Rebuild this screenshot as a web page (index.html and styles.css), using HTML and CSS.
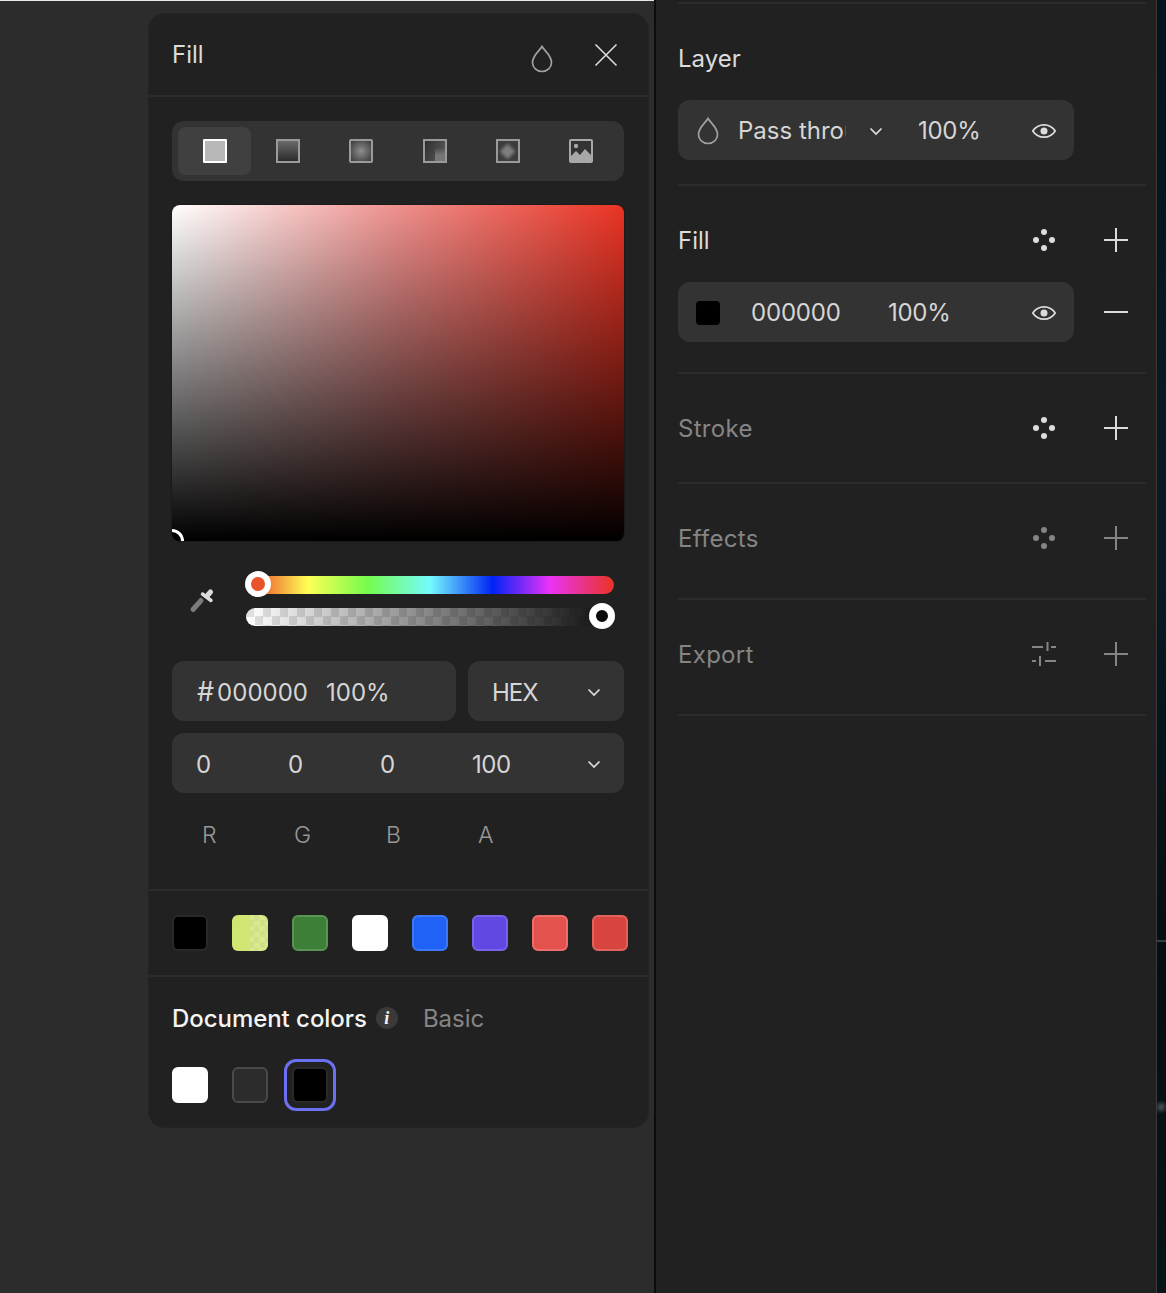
FILE: index.html
```html
<!DOCTYPE html>
<html>
<head>
    <title>Fill</title>
    <link rel="stylesheet" href="styles.css">
</head>
<body>
    <svg class="sprites" width="0" height="0">
        <symbol id="i-drop" viewBox="0 0 24 28"><path d="M12 1.500C9.800 5.500 2.500 10.500 2.500 17.500a9.500 9 0 0 0 19 0C21.500 10.500 14.200 5.500 12 1.500z" fill="none" stroke="currentColor" stroke-width="1.700"/></symbol>
        <symbol id="i-chev" viewBox="0 0 24 24"><path d="M6.500 9.500 12 15l5.500-5.500" fill="none" stroke="currentColor" stroke-width="1.700"/></symbol>
        <symbol id="i-eye" viewBox="0 0 24 24"><path d="M.8 12C3.500 7.800 7.500 5.800 12 5.800s8.500 2 11.200 6.200c-2.700 4.200-6.700 6.200-11.200 6.200S3.500 16.200.8 12z" fill="none" stroke="currentColor" stroke-width="1.700"/><circle cx="12" cy="12" r="3.500" fill="currentColor"/></symbol>
        <symbol id="i-dots" viewBox="0 0 24 24"><circle cx="12" cy="4" r="3" fill="currentColor"/><circle cx="4" cy="12" r="3" fill="currentColor"/><circle cx="20" cy="12" r="3" fill="currentColor"/><circle cx="12" cy="20" r="3" fill="currentColor"/></symbol>
        <symbol id="i-plus" viewBox="0 0 24 24"><path d="M12 0v24M0 12h24" fill="none" stroke="currentColor" stroke-width="2"/></symbol>
        <symbol id="i-sliders" viewBox="0 0 24 24"><path d="M0 5h11M15.500 0v9M19 5h5M0 19h4M8 14v10M13 19h11" fill="none" stroke="currentColor" stroke-width="2"/></symbol>
    </svg>

    <div class="stage">
        <div class="fill-panel">
            <div class="panel-head">
                <span class="title">Fill</span>
                <svg class="head-drop"><use href="#i-drop"/></svg>
                <svg class="head-close" viewBox="0 0 24 24"><path d="M1.500 1.500l21 21M22.500 1.500l-21 21" fill="none" stroke="currentColor" stroke-width="1.600"/></svg>
            </div>

            <div class="panel-body">
                <div class="tabs">
                    <div class="tab active"><span class="tab-icon solid"></span></div>
                    <div class="tab"><span class="tab-icon linear"></span></div>
                    <div class="tab"><span class="tab-icon radial"></span></div>
                    <div class="tab"><span class="tab-icon angular"></span></div>
                    <div class="tab"><span class="tab-icon diamond"></span></div>
                    <div class="tab">
                        <svg class="tab-svg" viewBox="0 0 24 24"><path fill-rule="evenodd" d="M2 0h20a2 2 0 0 1 2 2v20a2 2 0 0 1-2 2H2a2 2 0 0 1-2-2V2a2 2 0 0 1 2-2zM2 2v15l5-5 4 4 5-6 6 6V2z" fill="#a8a8a8"/><circle cx="7" cy="7" r="2.200" fill="#a8a8a8"/></svg>
                    </div>
                </div>

                <div class="picker">
                    <span class="picker-handle"></span>
                </div>

                <div class="slider-row">
                    <svg class="dropper" viewBox="0 0 26 26">
                        <path d="M4 21.500 12 12.500" fill="none" stroke="#7c7c7c" stroke-width="5" stroke-linecap="round"/>
                        <path d="M13.500 6 22 12.500" fill="none" stroke="#dcdcdc" stroke-width="3.500" stroke-linecap="round"/>
                        <path d="M18 8l3.500-4" fill="none" stroke="#dcdcdc" stroke-width="5" stroke-linecap="round"/>
                    </svg>
                    <div class="sliders">
                        <div class="hue"><span class="thumb hue-thumb"></span></div>
                        <div class="alpha"><span class="thumb alpha-thumb"></span></div>
                    </div>
                </div>

                <div class="field-row">
                    <div class="field hex-field"><span class="hex-value"><span class="hash">#</span>000000</span><span>100%</span></div>
                    <div class="field mode-field"><span class="mode-name">HEX</span><svg class="chev"><use href="#i-chev"/></svg></div>
                </div>
                <div class="field rgb-field">
                    <span class="rgb-cell">0</span>
                    <span class="rgb-cell">0</span>
                    <span class="rgb-cell">0</span>
                    <span class="rgb-cell">100</span>
                    <svg class="chev"><use href="#i-chev"/></svg>
                </div>
                <div class="rgb-labels">
                    <span>R</span><span>G</span><span>B</span><span>A</span>
                </div>
            </div>

            <div class="swatch-row">
                <span class="swatch s-black"></span>
                <span class="swatch s-lime"></span>
                <span class="swatch s-green"></span>
                <span class="swatch s-white"></span>
                <span class="swatch s-blue"></span>
                <span class="swatch s-violet"></span>
                <span class="swatch s-coral"></span>
                <span class="swatch s-red"></span>
            </div>

            <div class="doc-colors">
                <div class="doc-head">
                    <span class="doc-title">Document colors</span>
                    <span class="info">i</span>
                    <span class="doc-basic">Basic</span>
                </div>
                <div class="doc-swatches">
                    <span class="swatch s-white"></span>
                    <span class="swatch s-dark"></span>
                    <span class="swatch-ring"><span class="swatch s-pure"></span></span>
                </div>
            </div>
        </div>
    </div>

    <div class="inspector">
        <section class="block layer-block">
            <div class="block-head"><span class="block-title">Layer</span></div>
            <div class="prop-row">
                <svg class="row-drop"><use href="#i-drop"/></svg>
                <span class="blend-name">Pass through</span>
                <svg class="chev blend-chev"><use href="#i-chev"/></svg>
                <span class="pct">100%</span>
                <svg class="eye"><use href="#i-eye"/></svg>
            </div>
        </section>

        <section class="block fill-block">
            <div class="block-head">
                <span class="block-title">Fill</span>
                <svg class="act"><use href="#i-dots"/></svg>
                <svg class="act"><use href="#i-plus"/></svg>
            </div>
            <div class="prop-line">
                <div class="prop-row">
                    <span class="color-chip"></span>
                    <span class="hex-text">000000</span>
                    <span class="pct">100%</span>
                    <svg class="eye"><use href="#i-eye"/></svg>
                </div>
                <svg class="act minus" viewBox="0 0 24 24"><path d="M0 12h24" fill="none" stroke="currentColor" stroke-width="2"/></svg>
            </div>
        </section>

        <section class="block stroke-block">
            <div class="block-head">
                <span class="block-title dim">Stroke</span>
                <svg class="act"><use href="#i-dots"/></svg>
                <svg class="act"><use href="#i-plus"/></svg>
            </div>
        </section>

        <section class="block effects-block">
            <div class="block-head">
                <span class="block-title dim">Effects</span>
                <svg class="act dim"><use href="#i-dots"/></svg>
                <svg class="act dim"><use href="#i-plus"/></svg>
            </div>
        </section>

        <section class="block export-block">
            <div class="block-head">
                <span class="block-title dim">Export</span>
                <svg class="act dim"><use href="#i-sliders"/></svg>
                <svg class="act dim"><use href="#i-plus"/></svg>
            </div>
        </section>
    </div>

    <div class="wallpaper"></div>
</body>
</html>
```

FILE: styles.css
```css
* { box-sizing: border-box; }
html, body { margin: 0; height: 100%; }
body { display: flex; height: 1293px; overflow: hidden; background: #2c2c2c; font-family: Inter, "Noto Sans", sans-serif; font-size: 24px; font-weight: 400; color: #d6d6d6; }
svg { display: block; flex: none; }
.sprites { position: absolute; }

/* left canvas with the fill popup */
.stage { width: 654px; flex: none; padding: 13px 0 0 148px; border-top: 1px solid #e8e8e8; background: #2c2c2c; }
.fill-panel { width: 501px; height: 1115px; margin-top: -1px; background: #212121; border: 1px solid #242424; border-radius: 16px; }
.panel-head { display: flex; align-items: center; height: 83px; padding: 0 30px 0 23px; border-bottom: 2px solid #2c2c2c; }
.title { flex: 1; color: #dcdcdc; font-weight: 400; }
.head-drop { width: 24px; height: 28px; margin: 8px 40px 0 0; color: #a0a0a0; }
.head-close { width: 24px; height: 24px; color: #dcdcdc; }
.panel-body { padding: 24px 24px 0 23px; height: 794px; border-bottom: 2px solid #2c2c2c; }

.tabs { display: grid; grid-template-columns: repeat(6, 1fr); height: 60px; padding: 6px; background: #333; border-radius: 12px; }
.tab { display: flex; align-items: center; justify-content: center; border-radius: 8px; }
.tab.active { background: #404040; }
.tab-icon { display: flex; align-items: center; justify-content: center; width: 24px; height: 24px; border: 2px solid #9a9a9a; overflow: hidden; }
.tab-svg { width: 24px; height: 24px; }
.solid { background: #b8b8b8; border-color: #fff; border-radius: 1px; }
.linear { background: linear-gradient(#6a6a6a, #2c2c2c); }
.radial { background: radial-gradient(circle, #8e8e8e, #3a3a3a); border-radius: 2px; }
.angular { background: linear-gradient(to bottom, transparent, #777 55%) 100% 100% / 50% 65% no-repeat, linear-gradient(115deg, #2f2f2f, #5c5c5c); }
.diamond { background: #3c3c3c; }
.diamond::before { content: ""; width: 11px; height: 11px; background: #7e7e7e; transform: rotate(45deg); filter: blur(1.500px); }

.picker { position: relative; height: 336px; margin-top: 24px; border-radius: 8px; overflow: hidden; background: linear-gradient(to bottom, rgba(0,0,0,0) 0%, #000 100%), linear-gradient(to right, #fff 0%, #ee908d 50%, #ea3323 100%); box-shadow: 0 0 0 1px #1a1a1a; }
.picker-handle { position: absolute; left: -12px; bottom: -12px; width: 24px; height: 24px; border: 3px solid #fff; border-radius: 50%; background: #000; }

.slider-row { display: flex; align-items: center; margin-top: 35px; padding-left: 17px; }
.dropper { width: 26px; height: 26px; }
.sliders { display: flex; flex-direction: column; gap: 14px; width: 368px; margin-left: 31px; }
.hue, .alpha { position: relative; height: 18px; border-radius: 9px; }
.hue { background: linear-gradient(to right, #ea3323 0%, #ffff55 16.800%, #75fb4c 33%, #75fbfd 50%, #0023f5 67%, #ea33f7 82.500%, #ea3323 100%); }
.alpha { background: linear-gradient(to right, rgba(0,0,0,0) 0%, #0d0d0d 100%), conic-gradient(#fff 25%, #e2e2e2 0 50%, #fff 0 75%, #e2e2e2 0) 0 0 / 17px 17px; }
.thumb { position: absolute; top: -5px; width: 26px; height: 26px; border: 6px solid #fff; border-radius: 50%; }
.hue-thumb { left: -1px; background: #e9532a; }
.alpha-thumb { right: -1px; background: #0a0a0a; border-width: 7px; }

.field { display: flex; align-items: center; height: 60px; padding-top: 2px; background: #333; border-radius: 12px; }
.field-row { display: flex; gap: 12px; margin-top: 35px; }
.hex-field { width: 284px; padding-left: 25px; }
.hex-value { width: 129px; }
.hash { margin-right: 3px; font-size: 27px; line-height: 1; }
.mode-field { flex: 1; padding-left: 24px; padding-right: 18px; justify-content: space-between; }
.mode-name { letter-spacing: -1px; }
.chev { width: 24px; height: 24px; color: #dcdcdc; }
.rgb-field { margin-top: 12px; padding-left: 24px; padding-right: 18px; }
.rgb-cell { width: 92px; }
.rgb-cell:nth-child(4) { flex: 1; letter-spacing: -.4px; }
.rgb-labels { display: flex; padding: 27px 0 0 30px; color: #999; font-size: 23px; line-height: 30px; font-weight: 300; }
.rgb-labels span { width: 92px; }

.swatch-row { display: flex; gap: 24px; height: 86px; padding: 24px 0 0 23px; border-bottom: 2px solid #2c2c2c; }
.swatch { display: block; width: 36px; height: 36px; flex: none; border-radius: 6px; border: 2px solid transparent; }
.s-black { background: #000; border-color: #2a2a2a; }
.s-lime { background: linear-gradient(90deg, #d0e673 50%, rgba(208,230,115,0) 50%), conic-gradient(#d8ea8c 25%, #cee08a 0 50%, #d8ea8c 0 75%, #cee08a 0) 0 0 / 11px 11px; border: 0; }
.s-green { background: #3e7f38; border-color: #5a9455; }
.s-white { background: #fff; border-color: #fff; }
.s-blue { background: #1f62f5; border-color: #3d78f7; }
.s-violet { background: #6148e2; border-color: #7762e8; }
.s-coral { background: #e4524e; border-color: #ec6f6b; }
.s-red { background: #d8453e; border-color: #e2625c; }
.s-dark { background: #2c2c2c; border-color: #4a4a4a; }
.s-pure { background: #000; border-color: #2a2a2a; }

.doc-colors { padding: 0 0 0 23px; }
.doc-head { display: flex; align-items: center; height: 36px; margin-top: 23px; }
.doc-title { color: #f4f4f4; font-weight: 500; letter-spacing: -.05px; }
.info { display: flex; align-items: center; justify-content: center; width: 22px; height: 22px; margin-left: 9px; border-radius: 50%; background: #3a3a3a; color: #f4f4f4; font: italic 700 18px "Liberation Serif", serif; }
.doc-basic { margin-left: 25px; color: #858585; }
.doc-swatches { display: flex; align-items: center; gap: 24px; margin-top: 23px; }
.swatch-ring { display: flex; align-items: center; justify-content: center; width: 52px; height: 52px; margin-left: -8px; border: 3px solid #6b70f0; border-radius: 12px; }

/* right inspector */
.inspector { width: 503px; flex: none; padding-left: 22px; background: #212121; border-left: 2px solid #0c0c0c; border-right: 1px solid #3a3a3a; }
.block { width: 468px; border-bottom: 2px solid #2c2c2c; }
.block-head { display: flex; align-items: center; height: 30px; }
.block-title { flex: 1; color: #dcdcdc; }
.block-title.dim { color: #858585; letter-spacing: .3px; }
.act { width: 24px; height: 24px; margin-right: 18px; color: #dcdcdc; }
.act + .act { margin-left: 30px; }
.act.dim { color: #858585; }
.layer-block { height: 184px; margin-top: 2px; padding-top: 39px; border-top: 2px solid #2c2c2c; }
.fill-block { height: 188px; padding-top: 39px; }
.stroke-block { height: 110px; padding-top: 39px; }
.effects-block { height: 116px; padding-top: 39px; }
.export-block { height: 116px; padding-top: 39px; }
.prop-row { display: flex; align-items: center; width: 396px; height: 60px; margin-top: 27px; padding-top: 1px; background: #333; border-radius: 12px; }
.prop-line { display: flex; align-items: center; margin-top: 27px; }
.prop-line .prop-row { margin-top: 0; }
.row-drop { width: 24px; height: 28px; margin-left: 18px; color: #a0a0a0; }
.blend-name { width: 108px; margin-left: 18px; overflow: hidden; white-space: nowrap; }
.blend-chev { margin-left: 18px; }
.pct { width: 102px; letter-spacing: -.3px; }
.blend-chev + .pct { margin-left: 30px; }
.eye { width: 24px; height: 24px; margin-left: auto; margin-right: 18px; color: #dcdcdc; }
.color-chip { width: 24px; height: 24px; margin-left: 18px; background: #000; border-radius: 4px; }
.hex-text { width: 137px; margin-left: 31px; letter-spacing: -.2px; }
.minus { margin-left: 30px; margin-right: 0; }

.wallpaper { flex: 1; background: radial-gradient(circle at 4px 1107px, #4a5458 0, transparent 7px), linear-gradient(to bottom, transparent 940px, #2c4048 940px, #2c4048 942px, transparent 942px), linear-gradient(160deg, #06121c, #0a1a24 40%, #050d12 75%, #07141a); }
```
